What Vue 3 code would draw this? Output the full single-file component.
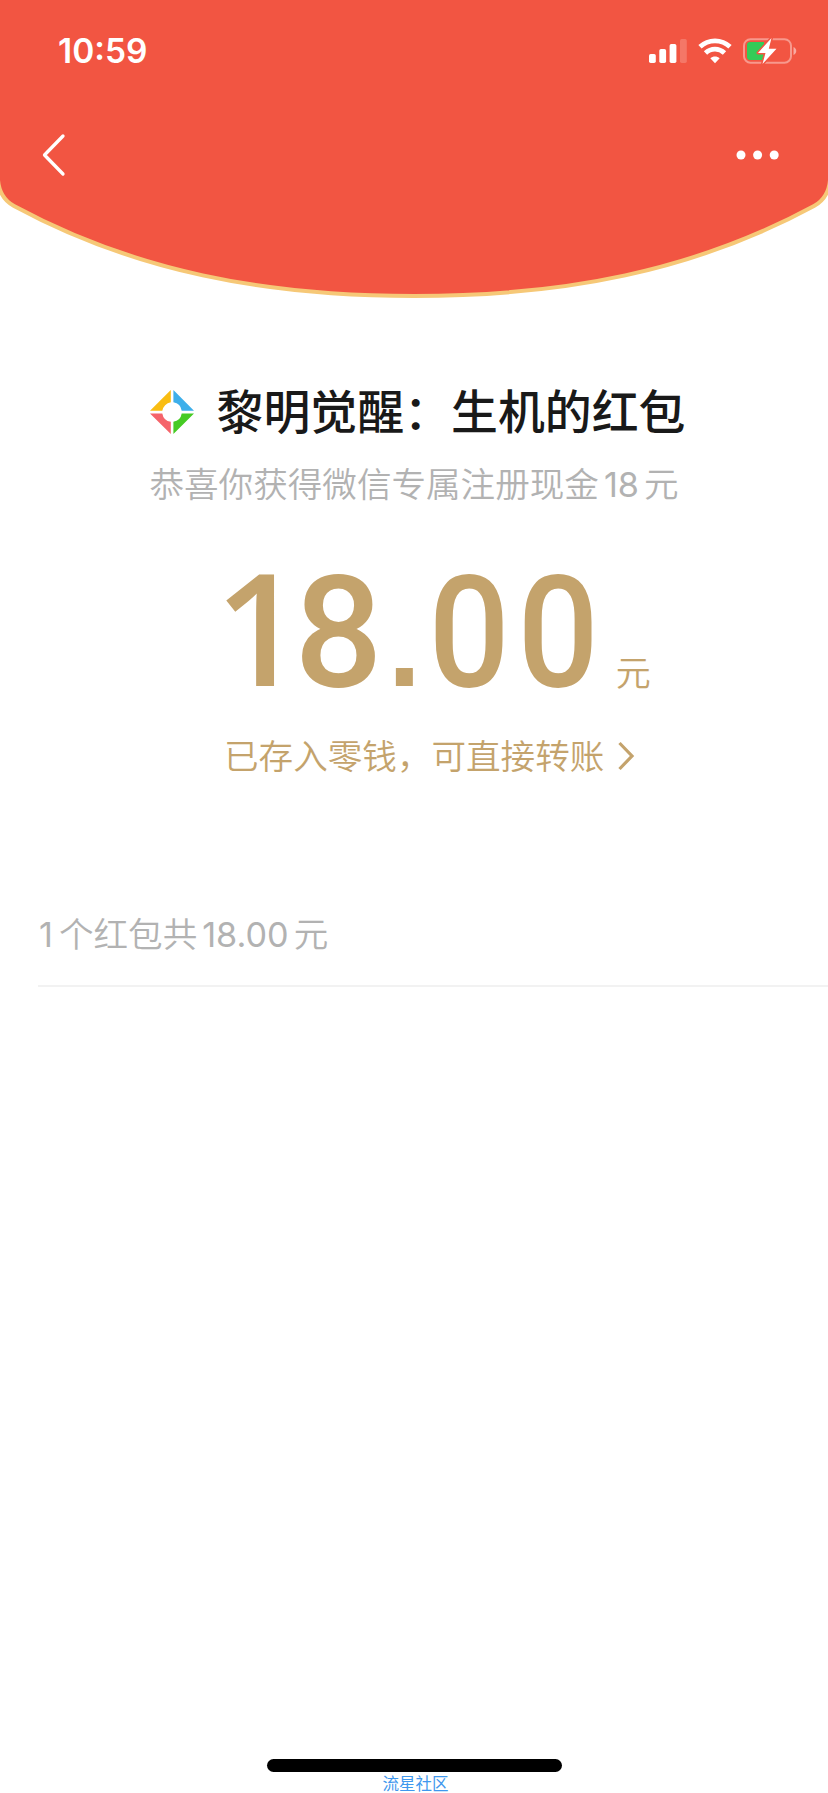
<script setup>
const bars = [
  { x: 0, y: 15, h: 9 },
  { x: 10.3, y: 10, h: 14 },
  { x: 20.6, y: 5, h: 19 },
  { x: 31, y: 0, h: 24, dim: true }
]
const amount = [
  { ch: '1', kind: 'one' },
  { ch: '8', kind: 'eight' },
  { ch: '.', kind: 'dot' },
  { ch: '0', kind: 'zero' },
  { ch: '0', kind: 'zero' }
]
</script>

<template>
  <main class="page">
    <header class="header">
      <svg class="flap" viewBox="0 0 828 300" width="828" height="300" aria-hidden="true">
        <path d="M-2 -5V180C-1 192 5 201 14 206C134 271 264 296 414 296S694 271 814 206C823 201 829 192 830 180V-5Z" fill="#f25542" stroke="#f6c877" stroke-width="4" />
      </svg>
      <div class="status">
        <span class="time">10:59</span>
        <div class="indicators">
          <svg class="signal" width="38" height="24" viewBox="0 0 38 24">
            <rect v-for="b in bars" :key="b.x" :x="b.x" :y="b.y" width="6.8" :height="b.h" rx="1.7" fill="#fff" :opacity="b.dim ? 0.2 : 1" />
          </svg>
          <svg class="wifi" width="34" height="26" viewBox="0 0 34 26">
            <g fill="none" stroke="#fff" stroke-width="4.8">
              <path d="M2 8.8C10.5 .8 23.500 .8 32 8.800" />
              <path d="M7.500 15C13 9.800 21 9.800 26.500 15" />
            </g>
            <path d="M12.300 20.300C15 17.800 19 17.800 21.700 20.300L17 25.300Z" fill="#fff" />
          </svg>
          <svg class="battery" width="54" height="28" viewBox="0 0 54 28">
            <rect x="1" y="2.200" width="47" height="23.500" rx="6.500" fill="none" stroke="#fff" stroke-opacity=".4" stroke-width="2" />
            <path d="M50.500 10V18C54.200 16.500 54.200 11.500 50.500 10Z" fill="#fff" opacity=".5" />
            <path d="M7 5H21V23H7Q4 23 4 20V8Q4 5 7 5Z" fill="#34cb57" />
            <path d="M28.500 1L15 16H22.500L19.500 27L33.500 11.800H25.800Z" fill="#fff" stroke="#f25542" stroke-width="3" stroke-linejoin="round" paint-order="stroke" />
          </svg>
        </div>
      </div>
      <nav class="nav">
        <svg width="24" height="44" viewBox="0 0 24 44">
          <path d="M21 3L2.500 22L21 41" fill="none" stroke="#fff" stroke-width="3.300" stroke-linecap="round" stroke-linejoin="round" />
        </svg>
        <svg width="43" height="10" viewBox="0 0 43 10" fill="#fff">
          <circle cx="5" cy="5" r="4.500" /><circle cx="21.600" cy="5" r="4.500" /><circle cx="38.200" cy="5" r="4.500" />
        </svg>
      </nav>
    </header>

    <section class="packet">
      <h1 class="sender">
        <svg class="logo" width="44" height="44" viewBox="0 0 44 44">
          <path d="M20.800 0V12.300A10 10 0 0 0 12.300 20.800H0Z" fill="#f9bd12" />
          <path d="M23.400 0L44 20.800H31.700A10 10 0 0 0 23.400 12.300Z" fill="#3eafea" />
          <path d="M0 23.400H12.300A10 10 0 0 0 20.800 31.700V44Z" fill="#f5646a" />
          <path d="M44 23.400L23.400 44V31.700A10 10 0 0 0 31.700 23.400Z" fill="#46cb24" />
        </svg>
        <span>黎明觉醒：生机的红包</span>
      </h1>
      <p class="wish">恭喜你获得微信专属注册现金<span class="num">18</span>元</p>
      <div class="amount">
        <span class="value"><span v-for="(g, i) in amount" :key="i" class="glyph" :class="g.kind">{{ g.ch }}</span></span>
        <span class="unit">元</span>
      </div>
      <div class="balance">
        <span>已存入零钱，可直接转账</span>
        <svg width="18" height="30" viewBox="0 0 18 30"><path d="M2.500 2L15 15L2.500 28" fill="none" stroke="#c4a36c" stroke-width="3.200" /></svg>
      </div>
    </section>

    <section class="summary"><span class="num first">1</span>个红包共<span class="num">18.00</span>元</section>

    <footer class="footer">
      <div class="home"></div>
      <span class="mark">流星社区</span>
    </footer>
  </main>
</template>

<style>
body { background: #fff; }
</style>

<style scoped>
.page {
  width: 828px;
  height: 1793px;
  display: flex;
  flex-direction: column;
  overflow: hidden;
  background: #fff;
  font-family: Inter, "Noto Sans CJK SC", sans-serif;
  text-autospace: no-autospace;
  white-space: nowrap;
}
.header { position: relative; height: 300px; flex: none; }
.flap { position: absolute; left: 0; top: 0; }
.status {
  position: relative;
  height: 102px;
  display: flex;
  justify-content: space-between;
  align-items: center;
  padding: 0 31px 0 58px;
  box-sizing: border-box;
}
.time { color: #fff; font-size: 33.500px; font-weight: 600; line-height: 40px; letter-spacing: 0; }
.indicators { display: flex; align-items: center; }
.wifi { margin: 0 11px 0 11px; }
.nav {
  position: relative;
  height: 106px;
  display: flex;
  justify-content: space-between;
  align-items: center;
  padding: 0 49px 0 42px;
}
.packet { display: flex; flex-direction: column; align-items: center; flex: none; }
.sender {
  display: flex;
  align-items: center;
  gap: 23px;
  margin: 78px 0 0 7px;
  height: 68px;
  font-size: 46.900px;
  line-height: 68px;
  font-weight: 500;
  color: #191919;
}
.wish { margin: 13px 0 0; height: 50px; line-height: 50px; font-size: 34.600px; color: #b2b2b2; font-weight: 350; }
.num { margin: 0 5px; font-size: 34.200px; font-weight: 400; }
.amount {
  display: flex;
  align-items: baseline;
  align-self: flex-start;
  height: 160px;
  margin: 37px 0 0 206px;
  line-height: 160px;
  color: #c4a36c;
}
.value { display: flex; align-items: baseline; }
.glyph {
  display: block;
  box-sizing: border-box;
  width: 88.200px;
  text-align: center;
  font-family: Roboto, sans-serif;
  font-weight: 500;
  font-size: 155.500px;
}
.one { padding-left: 18px; text-align: right; font-family: "Open Sans", sans-serif; font-weight: 600; font-size: 155px; display: flex; justify-content: center; }
.dot { width: 44px; font-family: "Liberation Sans", Arial, sans-serif; font-weight: 700; font-size: 120px; }
.zero { transform: translateX(-1px) scaleX(.92); }
.unit { font-size: 35px; margin-left: 13px; font-weight: 350; }
.balance { display: flex; align-items: center; align-self: flex-start; gap: 13px; margin: 25px 0 0 224px; height: 50px; line-height: 50px; font-size: 34.600px; color: #c4a36c; font-weight: 350; }
.summary { margin: 128px 0 0 38px; height: 76px; line-height: 50px; border-bottom: 2px solid #f2f2f2; font-size: 34.600px; color: #b2b2b2; flex: none; font-weight: 350; }
.first { margin: 0 6px 0 1px; }
.footer { margin-top: auto; display: flex; flex-direction: column; align-items: center; height: 34px; }
.home { width: 295px; height: 13px; border-radius: 7px; background: #000; flex: none; }
.mark { margin-top: 3px; margin-left: 3px; font-size: 16.500px; line-height: 18px; color: #3f98ee; font-weight: 400; }
</style>
